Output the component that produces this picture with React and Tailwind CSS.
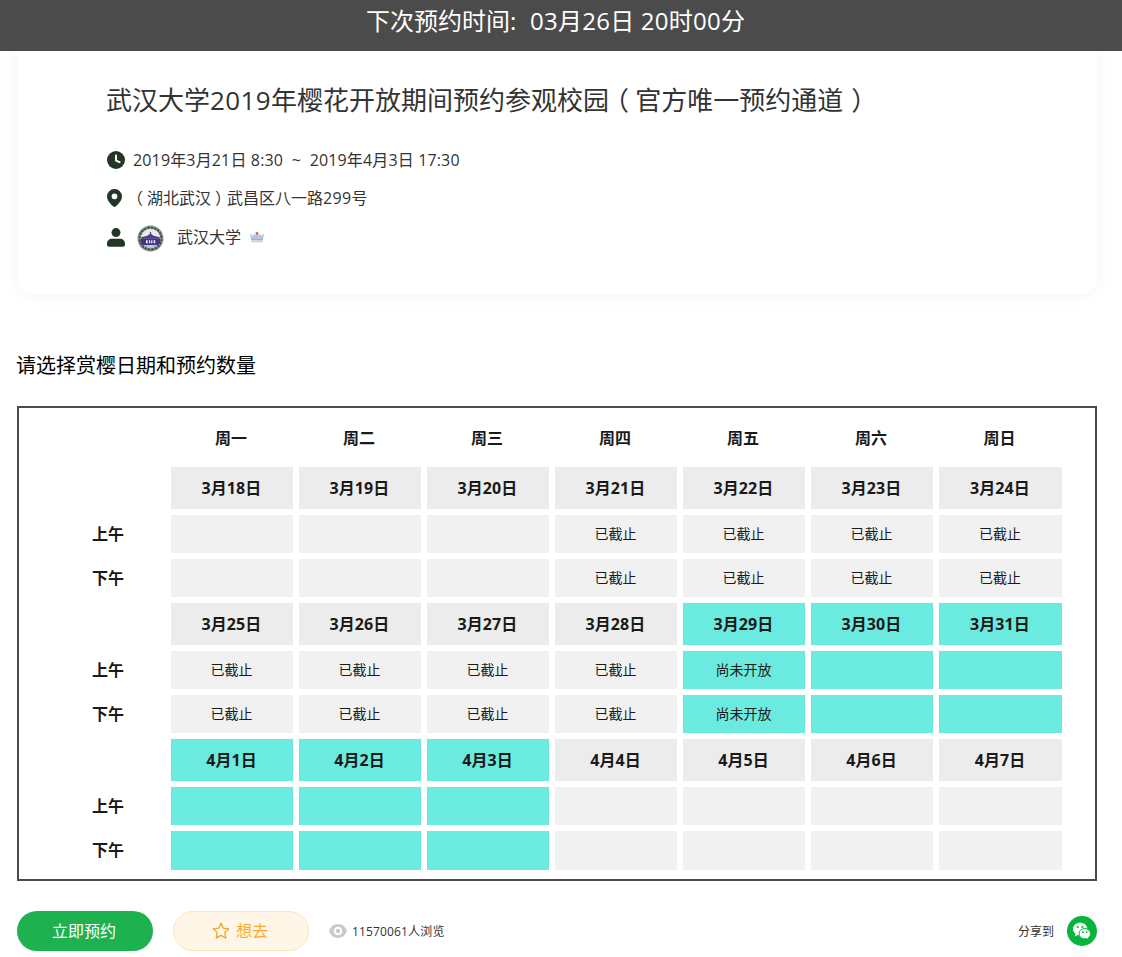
const DAYS = ["周一", "周二", "周三", "周四", "周五", "周六", "周日"];

const CLOSED = "已截止";
const PENDING = "尚未开放";

const WEEKS = [
  {
    dates: ["3月18日", "3月19日", "3月20日", "3月21日", "3月22日", "3月23日", "3月24日"],
    status: ["", "", "", CLOSED, CLOSED, CLOSED, CLOSED],
    open: [false, false, false, false, false, false, false],
  },
  {
    dates: ["3月25日", "3月26日", "3月27日", "3月28日", "3月29日", "3月30日", "3月31日"],
    status: [CLOSED, CLOSED, CLOSED, CLOSED, PENDING, "", ""],
    open: [false, false, false, false, true, true, true],
  },
  {
    dates: ["4月1日", "4月2日", "4月3日", "4月4日", "4月5日", "4月6日", "4月7日"],
    status: ["", "", "", "", "", "", ""],
    open: [true, true, true, false, false, false, false],
  },
];

const ROW =
  "grid grid-cols-[114px_122px_122px_122px_122px_122px_122px_123px] gap-x-[6px]";

function ClockIcon() {
  return (
    <svg width="18" height="18" viewBox="0 0 18 18" className="block">
      <circle cx="9" cy="9" r="9" fill="#233728" />
      <path d="M9 4.500V9.600L12.600 11.200" fill="none" stroke="#fff" strokeWidth="2" strokeLinecap="round" strokeLinejoin="round" />
    </svg>
  );
}

function PinIcon() {
  return (
    <svg width="16" height="18" viewBox="0 0 16 18" className="block">
      <path d="M7.5 0A7.4 7.4 0 0 0 0 7.4C0 11.6 4 15.4 6.4 17.5q1.1.9 2.2 0C11 15.4 15 11.6 15 7.4A7.4 7.4 0 0 0 7.5 0Zm0 10.2a2.9 2.9 0 1 1 0-5.8 2.9 2.9 0 0 1 0 5.8Z" fill="#233728" fillRule="evenodd" />
    </svg>
  );
}

function PersonIcon() {
  return (
    <svg width="18" height="19" viewBox="0 0 18 19" className="block">
      <circle cx="9" cy="4.600" r="4.500" fill="#233728" />
      <path d="M5 10.800h8c3.200 0 5 2.200 5 4.800v1.200c0 1.200-.8 2-2 2H2c-1.200 0-2-.8-2-2v-1.200c0-2.600 1.800-4.800 5-4.800Z" fill="#233728" />
    </svg>
  );
}

function Crest() {
  return (
    <svg width="27" height="27" viewBox="0 0 27 27" className="block">
      <circle cx="13.5" cy="13.5" r="12.4" fill="#b9c2be" stroke="#8b9591" strokeWidth="1.2" />
      <circle cx="13.5" cy="13.5" r="10.900" fill="none" stroke="#3c5047" strokeWidth="2" strokeDasharray="2.800 .6" />
      <circle cx="13.5" cy="13.5" r="9.500" fill="#e9e8f0" />
      <path d="M12.900 7h1.200v2l2.600 1.800 6 1.500v1.400H4.300v-1.400l6-1.500L12.900 9Z" fill="#4a4180" />
      <path d="M4 13.500h19v4.500l-2 2.200H6l-2-2.200Z" fill="#43367e" />
      <path d="M9 15.300h1.700v3H9zm3 0h1.200v3H12zm2.200 0h1.200v3h-1.200zm2.400 0h1.600v3h-1.600z" fill="#eeebfa" />
      <path d="M7.500 21.200q6 2.400 12 0" fill="none" stroke="#a7a5b6" strokeWidth="1" />
    </svg>
  );
}

function CrownIcon() {
  return (
    <svg width="16" height="12" viewBox="0 0 16 12" className="block">
      <path d="M.8 2.500 4 5 5.300 2.600 6.700 4.500 8 2l1.300 2.500 1.400-1.900L12 5l3.200-2.500L13.700 9H2.300Z" fill="#b4c5de" />
      <path d="M2.200 8.200h11.600v3.200H2.200z" fill="#cbd5e4" />
      <path d="M2.200 8.500h11.600" stroke="#93a7c6" strokeWidth=".8" />
      <circle cx="8" cy="2.500" r="1.400" fill="#d8655f" />
    </svg>
  );
}

function StarIcon() {
  return (
    <svg width="18" height="18" viewBox="0 0 18 18" className="block">
      <path d="M9 1.300 11.300 6.200 16.700 6.900 12.800 10.600 13.700 16 9 13.400 4.300 16 5.200 10.600 1.300 6.900 6.700 6.200Z" fill="none" stroke="#e8a62c" strokeWidth="1.300" strokeLinejoin="round" />
    </svg>
  );
}

function EyeIcon() {
  return (
    <svg width="18" height="14" viewBox="0 0 18 14" className="block">
      <path d="M9 0C4.800 0 1.500 2.800 0 7c1.500 4.200 4.800 7 9 7s7.500-2.800 9-7c-1.500-4.200-4.800-7-9-7Z" fill="#c7c9cd" />
      <circle cx="9" cy="7" r="4.300" fill="#fff" />
      <circle cx="9" cy="7" r="2.200" fill="#c7c9cd" />
    </svg>
  );
}

function WechatIcon() {
  return (
    <svg width="30" height="30" viewBox="0 0 30 30" className="block">
      <circle cx="15" cy="15" r="15" fill="#07b53b" />
      <path d="M13.200 6.800C9.200 6.800 6 9.500 6 13c0 1.900 1 3.600 2.600 4.700L7.700 20.500l3-1.500c.8.200 1.600.3 2.500.3 4 0 7.100-2.800 7.100-6.300s-3.100-6.200-7.100-6.200Z" fill="#fff" />
      <path d="M17.700 12.500c-3.200 0-5.700 2.300-5.700 5.200s2.500 5.200 5.700 5.200c.7 0 1.300-.1 1.900-.3l2.500 1.300-.7-2.300c1.300-.9 2.100-2.300 2.100-3.900 0-2.900-2.600-5.200-5.800-5.200Z" fill="#fff" stroke="#07b53b" strokeWidth="1" />
      <g fill="#07b53b">
        <circle cx="10.800" cy="11" r="1.100" />
        <circle cx="15.400" cy="11" r="1.100" />
        <circle cx="15.900" cy="16.200" r=".9" />
        <circle cx="19.700" cy="16.200" r=".9" />
      </g>
    </svg>
  );
}

function Session({ label, week, tall }) {
  return (
    <div className={`${ROW} ${tall ? "h-[39px]" : "h-[38px]"}`}>
      <div className="h-[38px] text-center text-base leading-[38px] font-bold">{label}</div>
      {week.status.map((text, i) => (
        <div
          key={i}
          className={`flex items-center justify-center pr-px text-sm ${week.open[i] ? "bg-[#6bebdf]" : "bg-[#f1f1f1]"}`}
        >
          {text}
        </div>
      ))}
    </div>
  );
}

export default function App() {
  return (
    <div className="h-[957px] w-[1122px] overflow-hidden bg-white font-['Open_Sans','Noto_Sans_CJK_SC',sans-serif] text-[#1a1a1a]">
      <header className="relative flex h-[51px] bg-[#4b4b4b] pl-[366px] text-2xl leading-[42px] whitespace-pre text-white">
        <span className="w-[164px]">下次预约时间:</span>
        <span className="tracking-[0.25px]">03月26日 20时00分</span>
      </header>

      <main className="ml-[17px] w-[1080px]">
        <section className="h-[243px] rounded-b-2xl pt-[28px] pl-[89px] shadow-[0_0_20px_rgba(0,0,0,0.05)]">
          <h1 className="flex h-[42px] text-[26px] leading-[42px] whitespace-nowrap text-[#333]">
            <span>武汉大学</span>
            <span className="tracking-[0.4px]">2019</span>
            <span>年樱花开放期间预约参观校园</span>
            <span className="mr-[6px] ml-[7px] [font-feature-settings:'halt']">（</span>
            <span>官方唯一预约通道</span>
            <span className="ml-[8px] [font-feature-settings:'halt']">）</span>
          </h1>
          <div className="mt-[20px] flex h-[38px] items-center text-base text-[#333]">
            <div className="w-[27px] pl-px"><ClockIcon /></div>
            <span className="tracking-[0.15px] whitespace-pre">2019年3月21日 8:30{"  ~  "}2019年4月3日 17:30</span>
          </div>
          <div className="flex h-[38px] items-center text-base text-[#333]">
            <div className="w-[27px] pl-px"><PinIcon /></div>
            <span className="mr-[4px] ml-[2px] [font-feature-settings:'halt']">（</span>
            <span>湖北武汉</span>
            <span className="mr-[4px] ml-[4px] [font-feature-settings:'halt']">）</span>
            <span>武昌区八一路<span className="tracking-[0.3px]">299</span>号</span>
          </div>
          <div className="flex h-[40px] items-center text-base text-[#333]">
            <div className="w-[31px] pl-px"><PersonIcon /></div>
            <div className="pt-[2px]"><Crest /></div>
            <span className="ml-[13px]">武汉大学</span>
            <div className="ml-[8px]"><CrownIcon /></div>
          </div>
        </section>

        <h2 className="mt-[57px] -ml-px h-[30px] text-xl leading-[30px] text-black">请选择赏樱日期和预约数量</h2>

        <section className="mt-[25px] h-[475px] border-2 border-[#4b4b4b] pt-[10px] pl-[32px]">
          <div className={`${ROW} h-[43px]`}>
            <div />
            {DAYS.map((day) => (
              <div key={day} className="pr-[2px] text-center text-base leading-[41px] font-bold">{day}</div>
            ))}
          </div>
          <div className="mt-[6px] flex flex-col gap-[6px]">
            {WEEKS.map((week, w) => (
              <div key={w} className="flex flex-col gap-[6px]">
                <div className={`${ROW} h-[42px]`}>
                  <div />
                  {week.dates.map((date, i) => (
                    <div
                      key={date}
                      className={`flex items-center justify-center pr-px text-base font-bold tracking-[0.1px] ${week.open[i] ? "bg-[#6bebdf]" : "bg-[#ececec]"}`}
                    >
                      {date}
                    </div>
                  ))}
                </div>
                <Session label="上午" week={week} />
                <Session label="下午" week={week} tall={w === 2} />
              </div>
            ))}
          </div>
        </section>

        <footer className="mt-[30px] flex h-[40px] items-center">
          <button className="h-[40px] w-[136px] rounded-full bg-[#1eb14f] pr-[2px] text-base text-white">立即预约</button>
          <button className="ml-[20px] flex h-[40px] w-[136px] items-center justify-center gap-[6px] rounded-full border border-[#fde5bb] bg-[#fff6e7] pr-[2px] text-base text-[#faab2c]">
            <StarIcon />
            想去
          </button>
          <div className="ml-[20px]"><EyeIcon /></div>
          <span className="ml-[5px] pt-[2px] text-xs tracking-[0.15px] text-[#333]">11570061人浏览</span>
          <span className="mr-[13px] ml-auto pt-[2px] text-xs text-[#333]">分享到</span>
          <WechatIcon />
        </footer>
      </main>
    </div>
  );
}
